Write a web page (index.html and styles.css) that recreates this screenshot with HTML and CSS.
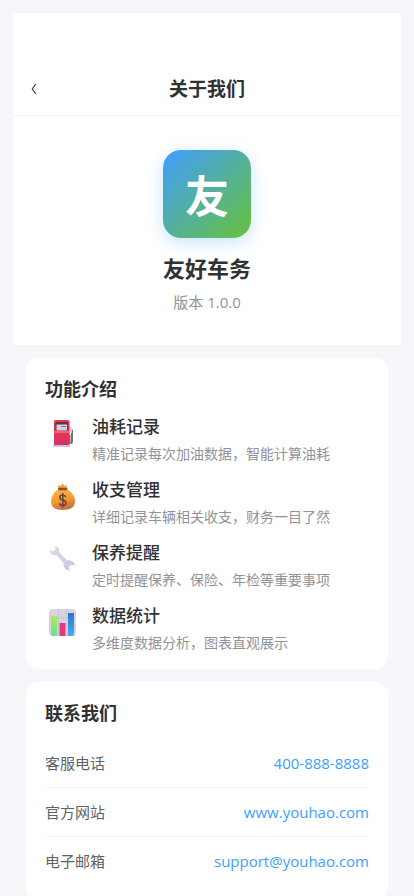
FILE: index.html
```html
<!DOCTYPE html>
<html lang="zh-CN">
<head>
    <meta charset="UTF-8">
    <meta name="viewport" content="width=device-width, initial-scale=1.0">
    <title>关于我们</title>
    <link rel="stylesheet" href="styles.css">
</head>
<body>
    <header class="nav-bar">
        <button type="button" class="back-btn" aria-label="返回">
            <svg viewBox="0 0 6 12" aria-hidden="true">
                <path d="M4.800 1L1.300 6l3.500 5" fill="none" stroke="#4a3c3e" stroke-width="1.200"/>
            </svg>
        </button>
        <h1 class="nav-title">关于我们</h1>
    </header>

    <section class="app-info">
        <div class="app-logo">友</div>
        <h2 class="app-name">友好车务</h2>
        <p class="app-version">版本 1.0.0</p>
    </section>

    <main class="cards">
        <section class="card">
            <h2 class="card-title">功能介绍</h2>
            <ul class="feature-list">
                <li class="feature-item">
                    <svg class="feature-icon" viewBox="0 0 28 28" aria-hidden="true">
                        <defs>
                            <linearGradient id="pump" x1="0" y1="0" x2="0" y2="1">
                                <stop offset="0" stop-color="#f0384a"/>
                                <stop offset="0.6" stop-color="#e5364d"/>
                                <stop offset="1" stop-color="#c9317f"/>
                            </linearGradient>
                        </defs>
                        <path d="M20 7l3 3.500v11q0 1.500-1.200 1.500t-1.300-1.500v-7" fill="none" stroke="#77717f" stroke-width="2"/>
                        <path d="M20 6l3 2v5h-3z" fill="#d5cfdf"/>
                        <rect x="5" y="0" width="15.500" height="26" rx="1.500" fill="url(#pump)"/>
                        <rect x="6.500" y="2" width="12.500" height="8.500" rx="0.800" fill="#5a3452"/>
                        <path d="M7.500 4.500h10.500v6H7.500z" fill="#d8cfe4"/>
                        <path d="M12 6.500h5" stroke="#83738f"/>
                        <path d="M5 12h15.500" stroke="#ee8493" stroke-width="1.200"/>
                        <rect x="4" y="25" width="17.500" height="2" rx="0.700" fill="#cdc3d7"/>
                    </svg>
                    <div class="feature-text">
                        <h3 class="feature-name">油耗记录</h3>
                        <p class="feature-desc">精准记录每次加油数据，智能计算油耗</p>
                    </div>
                </li>
                <li class="feature-item">
                    <svg class="feature-icon" viewBox="0 0 28 28" aria-hidden="true">
                        <defs>
                            <linearGradient id="bag" x1="0" y1="0" x2="0.3" y2="1">
                                <stop offset="0" stop-color="#ffba38"/>
                                <stop offset="0.6" stop-color="#f39b31"/>
                                <stop offset="1" stop-color="#cb7142"/>
                            </linearGradient>
                        </defs>
                        <path d="M10 6L8.500 2.500l3 .3L13.500.5 15.500 2.800l3-.3-1.500 3.500z" fill="#f9a62d"/>
                        <path d="M10 6h7.500c4 2 8.500 7 8.500 12 0 6-4 9-12.300 9S2 24 2 18C2 13 6 8 10 6z" fill="url(#bag)"/>
                        <rect x="9" y="4.800" width="9.500" height="2.500" rx="1.200" fill="#86505b"/>
                        <path d="M16.800 14q-.8-2-3.100-2-2.800 0-2.800 2.500 0 2 3 2.600 3.100.6 3.100 2.900 0 2.500-3.200 2.500-2.700 0-3.300-2.300M13.800 10v14.500" fill="none" stroke="#704044" stroke-width="1.600"/>
                    </svg>
                    <div class="feature-text">
                        <h3 class="feature-name">收支管理</h3>
                        <p class="feature-desc">详细记录车辆相关收支，财务一目了然</p>
                    </div>
                </li>
                <li class="feature-item">
                    <svg class="feature-icon" viewBox="0 0 28 28" aria-hidden="true">
                        <defs>
                            <linearGradient id="wrench" x1="0" y1="0" x2="1" y2="1">
                                <stop offset="0" stop-color="#dddce1"/>
                                <stop offset="0.5" stop-color="#d9cdeb"/>
                                <stop offset="1" stop-color="#cbc7d2"/>
                            </linearGradient>
                        </defs>
                        <path d="M5.500.3C8.800.3 11 3.300 10.300 6.200l7.800 8.200c3.700-.8 7.600 1.400 7.900 5.300l-3.600-1-2.800 2.400 1 3.400c-4.300-.2-6.700-3.800-5.900-7.600L7.200 9C3.500 9.800.3 7.500.5 3.500l3.200 1.800 2.900-2z" fill="url(#wrench)"/>
                    </svg>
                    <div class="feature-text">
                        <h3 class="feature-name">保养提醒</h3>
                        <p class="feature-desc">定时提醒保养、保险、年检等重要事项</p>
                    </div>
                </li>
                <li class="feature-item">
                    <svg class="feature-icon" viewBox="0 0 28 28" aria-hidden="true">
                        <defs>
                            <linearGradient id="bar-green" x1="0" y1="0" x2="0" y2="1">
                                <stop offset="0" stop-color="#a8ef55"/>
                                <stop offset="1" stop-color="#6cdb9b"/>
                            </linearGradient>
                            <linearGradient id="bar-blue" x1="0" y1="0" x2="0" y2="1">
                                <stop offset="0" stop-color="#2d75cf"/>
                                <stop offset="1" stop-color="#42aff0"/>
                            </linearGradient>
                        </defs>
                        <rect width="27" height="27" rx="4" fill="#d9d3e1"/>
                        <path d="M9.500 0v27M18 0v27M0 9h27M0 18h27" stroke="#c4bece" stroke-width="0.800"/>
                        <path d="M2 7h6v20H4q-2 0-2-2z" fill="url(#bar-green)"/>
                        <path d="M10.500 14h6v13h-6z" fill="#e23a7c"/>
                        <path d="M19 4h6v21q0 2-2 2h-4z" fill="url(#bar-blue)"/>
                    </svg>
                    <div class="feature-text">
                        <h3 class="feature-name">数据统计</h3>
                        <p class="feature-desc">多维度数据分析，图表直观展示</p>
                    </div>
                </li>
            </ul>
        </section>

        <section class="card">
            <h2 class="card-title">联系我们</h2>
            <dl class="contact-list">
                <div class="contact-item">
                    <dt>客服电话</dt>
                    <dd><a href="tel:400-888-8888">400-888-8888</a></dd>
                </div>
                <div class="contact-item">
                    <dt>官方网站</dt>
                    <dd><a href="https://www.youhao.com">www.youhao.com</a></dd>
                </div>
                <div class="contact-item">
                    <dt>电子邮箱</dt>
                    <dd><a href="mailto:support@youhao.com">support@youhao.com</a></dd>
                </div>
            </dl>
        </section>
    </main>
</body>
</html>
```

FILE: styles.css
```css
:root {
    --primary-color: #409eff;
    --success-color: #67c23a;
    --bg-color: #f5f7fb;
    --text-color: #303133;
    --text-regular: #606266;
    --text-secondary: #909399;
    --border-color: #f2f4f7;
}

* {
    box-sizing: border-box;
    margin: 0;
    padding: 0;
}

body {
    font-family: "Open Sans", "Noto Sans CJK SC", sans-serif;
    background-color: var(--bg-color);
    color: var(--text-color);
    padding: 13px;
}

.nav-bar {
    display: grid;
    grid-template-columns: 24px 1fr 24px;
    align-items: center;
    padding: 63px 18px 13px;
    background-color: white;
    border-bottom: 1px solid var(--border-color);
}

.back-btn {
    display: flex;
    align-items: center;
    height: 26px;
    border: none;
    background: none;
    cursor: pointer;
}

.back-btn svg {
    width: 6px;
    height: 12px;
}

.nav-title {
    font-size: 19px;
    font-weight: 600;
    line-height: 26px;
    text-align: center;
}

.app-info {
    display: flex;
    flex-direction: column;
    align-items: center;
    padding: 34px 16px 31px;
    background-color: white;
}

.app-logo {
    width: 88px;
    height: 88px;
    margin-bottom: 15px;
    border-radius: 18px;
    background: linear-gradient(135deg, var(--primary-color), var(--success-color));
    box-shadow: 0 4px 16px rgba(64, 158, 255, 0.3);
    color: white;
    font-size: 44px;
    font-weight: 600;
    line-height: 92px;
    text-align: center;
}

.app-name {
    margin-bottom: 7px;
    font-size: 22px;
    font-weight: 600;
    line-height: 30px;
}

.app-version {
    color: var(--text-secondary);
    font-size: 15px;
    line-height: 24px;
}

.cards {
    display: flex;
    flex-direction: column;
    gap: 13px;
    padding: 13px;
}

.card {
    padding: 19px 19px 16px;
    border-radius: 13px;
    background-color: white;
}

.card-title {
    margin-bottom: 13px;
    font-size: 18px;
    font-weight: 600;
    line-height: 25px;
}

.feature-list {
    display: flex;
    flex-direction: column;
    gap: 14px;
    list-style: none;
}

.feature-item {
    display: flex;
    gap: 11px;
}

.feature-icon {
    flex: none;
    width: 36px;
    height: 28px;
    margin-top: 5px;
}

.feature-name {
    margin-bottom: 5px;
    font-size: 17px;
    font-weight: 500;
    line-height: 24px;
}

.feature-desc {
    color: var(--text-secondary);
    font-size: 14px;
    line-height: 20px;
}

.contact-item {
    display: flex;
    justify-content: space-between;
    align-items: center;
    padding: 12px 0;
    border-bottom: 1px solid var(--border-color);
    font-size: 15px;
    line-height: 24px;
}

.contact-item:last-child {
    border-bottom: none;
}

.contact-item dt {
    color: var(--text-regular);
}

.contact-item a {
    color: var(--primary-color);
    text-decoration: none;
}
```
